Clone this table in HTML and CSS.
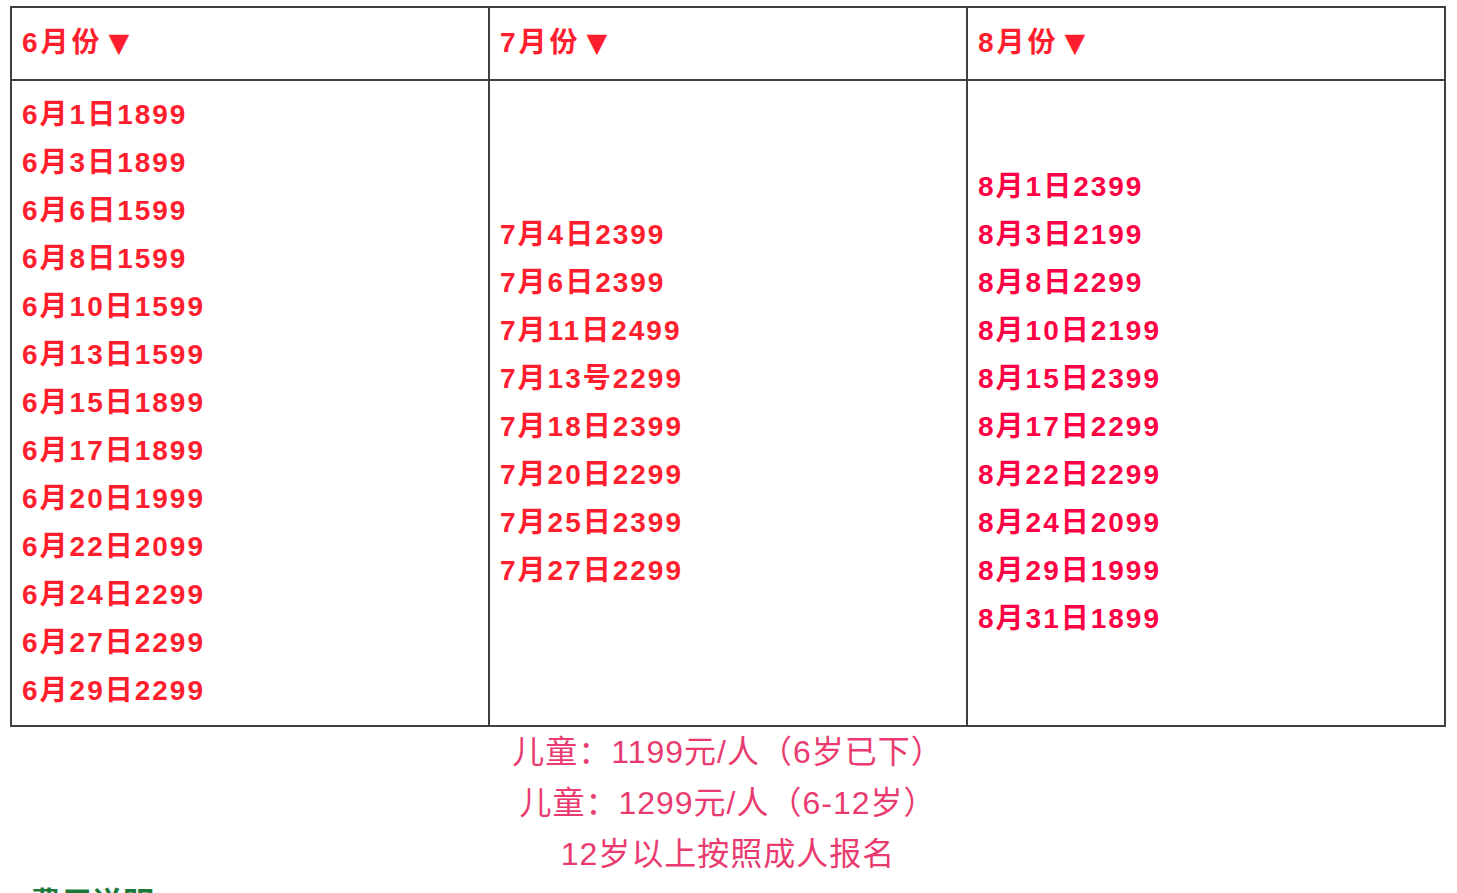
FILE: index.html
```html
<!DOCTYPE html>
<html lang="zh">
<head>
<meta charset="utf-8">
<title>出团日期</title>
<link rel="stylesheet" href="styles.css">
</head>
<body>
<div class="page">
  <table class="dates">
    <colgroup><col class="c"><col class="c"><col class="c"></colgroup>
    <thead>
      <tr>
        <th>6月份<span class="arrow">▼</span></th>
        <th>7月份<span class="arrow">▼</span></th>
        <th>8月份<span class="arrow">▼</span></th>
      </tr>
    </thead>
    <tbody>
      <tr>
        <td>
          <div class="d">6月1日1899</div>
          <div class="d">6月3日1899</div>
          <div class="d">6月6日1599</div>
          <div class="d">6月8日1599</div>
          <div class="d">6月10日1599</div>
          <div class="d">6月13日1599</div>
          <div class="d">6月15日1899</div>
          <div class="d">6月17日1899</div>
          <div class="d">6月20日1999</div>
          <div class="d">6月22日2099</div>
          <div class="d">6月24日2299</div>
          <div class="d">6月27日2299</div>
          <div class="d">6月29日2299</div>
        </td>
        <td>
          <div class="d">7月4日2399</div>
          <div class="d">7月6日2399</div>
          <div class="d">7月11日2499</div>
          <div class="d">7月13号2299</div>
          <div class="d">7月18日2399</div>
          <div class="d">7月20日2299</div>
          <div class="d">7月25日2399</div>
          <div class="d">7月27日2299</div>
        </td>
        <td class="aug">
          <div class="d">8月1日2399</div>
          <div class="d">8月3日2199</div>
          <div class="d">8月8日2299</div>
          <div class="d">8月10日2199</div>
          <div class="d">8月15日2399</div>
          <div class="d">8月17日2299</div>
          <div class="d">8月22日2299</div>
          <div class="d">8月24日2099</div>
          <div class="d">8月29日1999</div>
          <div class="d">8月31日1899</div>
        </td>
      </tr>
    </tbody>
  </table>
  <div class="notes">
    <p>儿童：1199元/人（6岁已下）</p>
    <p>儿童：1299元/人（6-12岁）</p>
    <p>12岁以上按照成人报名</p>
  </div>
  <h2 class="section">费用说明</h2>
</div>
</body>
</html>
```
FILE: styles.css
```css
html, body {
  margin: 0;
  padding: 0;
  background: #ffffff;
}
body {
  font-family: "Liberation Sans", "Noto Sans CJK SC", sans-serif;
}
.page {
  padding: 6px 0 0 10px;
  width: 1436px;
}
.dates {
  width: 1436px;
  border-collapse: collapse;
  table-layout: fixed;
}
.dates .c {
  width: 33.333%;
}
.dates th,
.dates td {
  border: 2px solid #404040;
  text-align: left;
  font-size: 28px;
  font-weight: bold;
  letter-spacing: 2px;
  line-height: 48px;
  color: #ff1e2d;
}
.dates th {
  padding: 11px 10px 12px;
  height: 48px;
  letter-spacing: 3px;
}
.dates td {
  padding: 10px;
  vertical-align: middle;
}
.dates td.aug {
  color: #ff0044;
}
.arrow {
  font-family: "DejaVu Sans", sans-serif;
  font-size: 27px;
  font-weight: normal;
  letter-spacing: 0;
  margin-left: 6px;
}
.d {
  white-space: nowrap;
}
.notes {
  text-align: center;
  color: #e93b6f;
  font-size: 32px;
  letter-spacing: 1px;
  line-height: 51px;
}
.notes p {
  margin: 0;
}
.section {
  margin: 4px 0 0 20px;
  font-size: 31px;
  line-height: 40px;
  color: #1b7a3a;
  font-weight: bold;
}
```
